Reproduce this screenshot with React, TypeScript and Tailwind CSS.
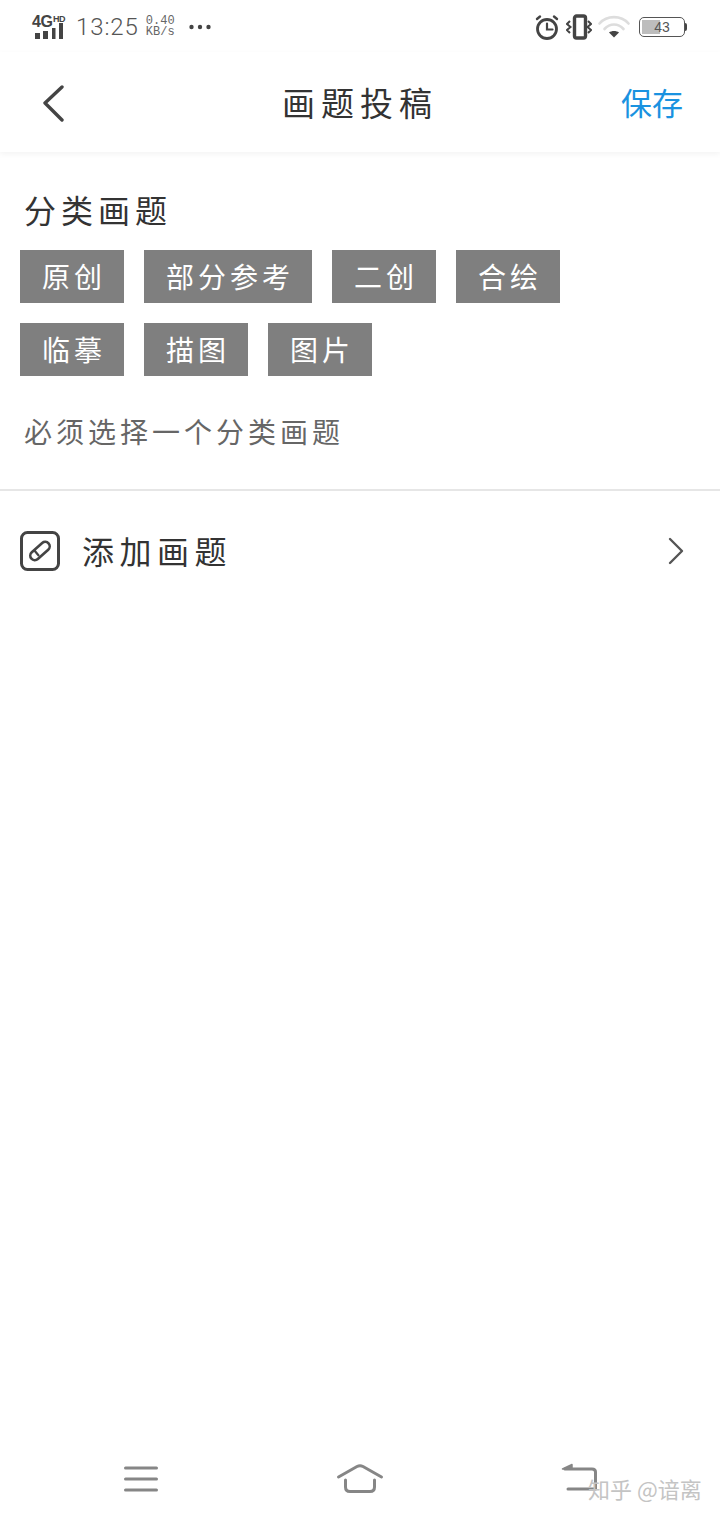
const font = { fontFamily: '"Noto Sans CJK SC", sans-serif' };

const tagRows = [
  ['原创', '部分参考', '二创', '合绘'],
  ['临摹', '描图', '图片'],
];

function StatusBar() {
  return (
    <div className="h-[52px] pl-[32px] pr-[33px] pt-[14px] flex items-start justify-between text-[#444]">
      <div className="flex items-center">
        <div className="w-[36px] h-[26px] relative">
          <span className="absolute left-0 top-0 text-[16px] leading-[16px] font-bold font-['Liberation_Sans'] tracking-[-0.5px]">4G</span>
          <span className="absolute left-[21px] -top-[1px] text-[9px] leading-[12px] font-bold font-['Liberation_Sans'] tracking-[-0.5px]">HD</span>
          <svg width="36" height="26" viewBox="0 0 36 26" className="absolute left-0 top-0">
            <rect x="3" y="19" width="5" height="6" fill="#444" />
            <rect x="11" y="17" width="5" height="8" fill="#444" />
            <rect x="20" y="14" width="3.5" height="11" fill="#444" />
            <rect x="27" y="9" width="4" height="16" fill="#444" />
          </svg>
        </div>
        <span className="ml-[8px] text-[24px] leading-[26px] tracking-[0.9px] text-[#555] font-['Roboto'] font-light">13:25</span>
        <div className="ml-[7px] flex flex-col items-center text-[12px] leading-[11px] text-[#666] font-['Liberation_Mono']">
          <span>0.40</span>
          <span>KB/s</span>
        </div>
        <svg width="22" height="6" viewBox="0 0 22 6" className="ml-[14px]">
          <circle cx="2.5" cy="3" r="2.2" fill="#444" />
          <circle cx="11" cy="3" r="2.2" fill="#444" />
          <circle cx="19.5" cy="3" r="2.2" fill="#444" />
        </svg>
      </div>
      <div className="flex items-center">
        <svg width="24" height="26" viewBox="0 0 24 26" fill="none" stroke="#444" strokeLinecap="round">
          <circle cx="12" cy="15" r="9.5" strokeWidth="2.8" />
          <path d="M12 9.5V15.5H17.5" strokeWidth="2.2" />
          <path d="M2 5L5 2.5M22 5L19 2.5" strokeWidth="2.4" />
        </svg>
        <svg width="26" height="26" viewBox="0 0 26 26" fill="none" stroke="#444" className="ml-[7px]">
          <rect x="8.5" y="2" width="11" height="22" rx="2" strokeWidth="3.4" />
          <path d="M4 7L1 10L4.5 13L1 16L4 19M22 7L25 10L21.5 13L25 16L22 19" strokeWidth="2" />
        </svg>
        <svg width="32" height="26" viewBox="0 0 32 26" fill="none" className="ml-[6px]" strokeLinecap="round">
          <path d="M1.5 9.5C9 1 23 1 30.5 9.5" stroke="#ddd" strokeWidth="2.6" />
          <path d="M6.5 15C12 9 20 9 25.5 15" stroke="#ddd" strokeWidth="2.6" />
          <path d="M11 18.5C13.5 16.5 18.5 16.5 21 18.5L16 23.5Z" fill="#444" />
        </svg>
        <div className="ml-[9px] w-[46px] h-[20px] relative rounded-[5px] border border-[#555] overflow-hidden p-[2px]">
          <div className="w-[18px] h-full bg-[#bdbdbd]" />
          <span className="absolute inset-0 text-center text-[14px] leading-[18px] text-[#555] font-['Liberation_Sans']">43</span>
        </div>
        <div className="w-[2px] h-[8px] bg-[#444] rounded-r" />
      </div>
    </div>
  );
}

function Header() {
  return (
    <div className="h-[100px] pl-[42px] pr-[37px] flex items-center shadow-[0_2px_6px_rgba(0,0,0,0.05)]">
      <svg width="24" height="40" viewBox="0 0 24 40" fill="none" stroke="#444" strokeWidth="3.4" strokeLinecap="round" strokeLinejoin="round">
        <path d="M20 5L3 21L20 38" />
      </svg>
      <span className="ml-[216px] text-[33px] leading-[44px] tracking-[6px] text-[#333]">画题投稿</span>
      <span className="ml-auto text-[31px] leading-[44px] text-[#1a92e0]">保存</span>
    </div>
  );
}

function Tags() {
  return (
    <div className="mt-[18px] flex flex-col gap-[20px]">
      {tagRows.map((row, i) => (
        <div key={i} className="flex gap-[20px]">
          {row.map((t) => (
            <div key={t} className="h-[53px] pl-[22px] pr-[18px] bg-[#7f7f7f] text-white text-[28px] tracking-[4px] leading-[53px] whitespace-nowrap">
              {t}
            </div>
          ))}
        </div>
      ))}
    </div>
  );
}

export default function App() {
  return (
    <div className="relative w-[720px] h-[1520px] bg-white flex flex-col overflow-hidden" style={font}>
      <StatusBar />
      <Header />

      <div className="px-[20px] pt-[34px] h-[339px] border-b-2 border-[#e6e6e6]">
        <h2 className="pl-[4px] text-[32px] leading-[46px] tracking-[5px] text-[#333]">分类画题</h2>
        <Tags />
        <p className="mt-[33px] pl-[4px] text-[28px] leading-[44px] tracking-[4px] text-[#666]">必须选择一个分类画题</p>
      </div>

      <div className="h-[120px] pl-[20px] pr-[35px] flex items-center">
        <svg width="40" height="40" viewBox="0 0 40 40" fill="none" stroke="#444">
          <rect x="1.5" y="1.5" width="37" height="37" rx="6" strokeWidth="3" />
          <rect x="8.5" y="15.5" width="23" height="9" rx="4.5" strokeWidth="2.6" transform="rotate(-42 20 20)" />
          <path d="M14.5 19.5L19 25" strokeWidth="2.2" />
        </svg>
        <span className="ml-[22px] -mt-[2px] text-[32px] leading-[44px] tracking-[5.5px] text-[#333]">添加画题</span>
        <svg width="18" height="28" viewBox="0 0 18 28" fill="none" stroke="#555" strokeWidth="2.4" strokeLinecap="round" strokeLinejoin="round" className="ml-auto">
          <path d="M3 2L15 14L3 26" />
        </svg>
      </div>

      <div className="mt-auto h-[84px] pl-[124px] pr-[123px] flex items-start justify-between">
        <svg width="34" height="30" viewBox="0 0 34 30" fill="none" stroke="#868686" strokeWidth="3" strokeLinecap="round" className="mt-[29px]">
          <path d="M1.5 3H32.5M1.5 14H32.5M1.5 25H32.5" />
        </svg>
        <svg width="48" height="34" viewBox="0 0 48 34" fill="none" stroke="#868686" strokeWidth="3" strokeLinecap="round" strokeLinejoin="round" className="mt-[26px]">
          <path d="M2.5 15L21 4.5C23 3.5 25 3.5 27 4.5L45.5 15" />
          <path d="M9.5 18V25C9.5 28 11 29.5 14 29.5H34C37 29.5 38.5 28 38.5 25V18" />
        </svg>
        <svg width="36" height="32" viewBox="0 0 36 32" fill="none" stroke="#868686" strokeWidth="3" strokeLinecap="round" strokeLinejoin="round" className="mt-[26px]">
          <path d="M4 7H31C33 7 34.5 8 34.5 10V27H7" />
          <path d="M1.5 7L11 2.5V7Z" fill="#868686" strokeWidth="1.5" />
        </svg>
      </div>

      <div className="absolute left-[588px] top-[1474px] text-[22px] leading-[28px] text-[#c4c4c4] whitespace-nowrap">知乎 @谙离</div>
    </div>
  );
}
